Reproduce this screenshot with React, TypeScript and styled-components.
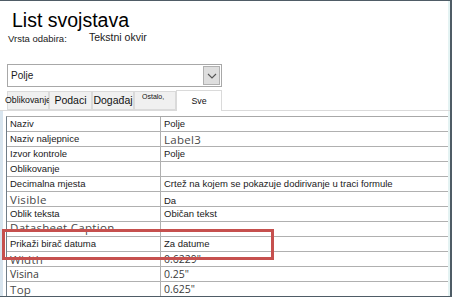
import { FC } from 'react';
import styled, { createGlobalStyle } from 'styled-components';

const GlobalStyle = createGlobalStyle`
  html, body {
    margin: 0;
    padding: 0;
    background: #fff;
  }
`;

type TextSize = 'normal' | 'big' | 'medium' | 'raised' | 'low';

interface RowData {
  label: string;
  value: string;
  labelSize?: TextSize;
  valueSize?: TextSize;
}

const rows: RowData[] = [
  { label: 'Naziv', value: 'Polje' },
  { label: 'Naziv naljepnice', value: 'Label3', valueSize: 'big' },
  { label: 'Izvor kontrole', value: 'Polje' },
  { label: 'Oblikovanje', value: '' },
  { label: 'Decimalna mjesta', value: 'Crtež na kojem se pokazuje dodirivanje u traci formule' },
  { label: 'Visible', value: 'Da', labelSize: 'big', valueSize: 'low' },
  { label: 'Oblik teksta', value: 'Običan tekst' },
  { label: 'Datasheet Caption', value: '', labelSize: 'raised' },
  { label: 'Prikaži birač datuma', value: 'Za datume' },
  { label: 'Width', value: '0.6229"', labelSize: 'big', valueSize: 'medium' },
  { label: 'Visina', value: '0.25"', labelSize: 'medium', valueSize: 'medium' },
  { label: 'Top', value: '0.625"', labelSize: 'big', valueSize: 'medium' },
];

const tabs = [
  { name: 'Oblikovanje', size: 'small', width: 42 },
  { name: 'Podaci', size: 'large', width: 43 },
  { name: 'Događaj', size: 'large', width: 42 },
  { name: 'Ostalo,', size: 'tiny', width: 42 },
  { name: 'Sve', size: 'small', width: 46 },
];

const Frame = styled.div`
  position: relative;
  width: 452px;
  height: 297px;
  box-sizing: border-box;
  border-top: 1px solid #4f5c66;
  border-right: 2px solid #4f5c66;
  border-bottom: 1px solid #4f5c66;
  box-shadow: inset -2px 0 0 #e4f3f3;
  overflow: hidden;
  font-family: 'Liberation Sans', Arial, sans-serif;
  color: #1a1a1a;
`;

const Header = styled.div`
  height: 63px;
  box-sizing: border-box;
  padding: 8px 0 0 8px;
`;

const Title = styled.h1`
  margin: 0 0 0 4px;
  font-size: 19.5px;
  line-height: 22px;
  font-weight: 400;
  color: #000;
`;

const SubRow = styled.div`
  display: flex;
  align-items: flex-start;
  margin-top: 1px;
`;

const SubLabel = styled.span`
  width: 81px;
  font-size: 9.5px;
  line-height: 12px;
  padding-top: 1px;
`;

const SubValue = styled.span`
  font-size: 10.5px;
  line-height: 12px;
  margin-top: -1px;
`;

const Dropdown = styled.div`
  display: flex;
  align-items: center;
  justify-content: space-between;
  margin-left: 7px;
  width: 215px;
  height: 23px;
  box-sizing: border-box;
  border: 1px solid #a8a8a8;
  padding: 0 1px 0 3px;
  font-size: 10px;
`;

const DropButton = styled.div`
  display: flex;
  align-items: center;
  justify-content: center;
  width: 17px;
  height: 19px;
  box-sizing: border-box;
  background: #dedede;
  border: 1px solid #b0b0b0;
`;

const TabStrip = styled.div`
  display: flex;
  align-items: flex-end;
  margin: 2px 0 0 7px;
  height: 21px;
`;

const Tab = styled.div<{ $active?: boolean; $width: number }>`
  position: relative;
  display: flex;
  align-items: ${(p) => (p.$active ? 'center' : 'flex-end')};
  justify-content: center;
  width: ${(p) => p.$width}px;
  height: ${(p) => (p.$active ? 21 : 19)}px;
  box-sizing: border-box;
  background: ${(p) => (p.$active ? '#fff' : '#f0f0f0')};
  border: 1px solid #dadada;
  border-bottom: ${(p) => (p.$active ? 'none' : '1px solid #dadada')};
  padding-bottom: ${(p) => (p.$active ? 0 : 3)}px;
  margin-bottom: ${(p) => (p.$active ? -1 : 0)}px;
  z-index: ${(p) => (p.$active ? 1 : 0)};
  white-space: nowrap;
`;

const TabLabel = styled.span<{ $size: string }>`
  font-size: ${(p) =>
    p.$size === 'large' ? '10.5px' : p.$size === 'tiny' ? '7px' : '8.8px'};
  line-height: 12px;
  color: #111;
  ${(p) =>
    p.$size === 'tiny' &&
    `position: absolute; top: -1px; left: 7px;`}
`;

const Panel = styled.div`
  border-top: 1px solid #dadada;
  padding: 5px 2px 0 6px;
  box-shadow: inset 3px 0 0 #d8e5ef;
  height: 190px;
`;

const Grid = styled.div`
  border-top: 1px solid #a8a8a8;
  border-left: 1px solid #6f7d88;
`;

const Row = styled.div`
  display: flex;
  height: 15px;
  box-sizing: border-box;
  border-bottom: 1px solid #b0b0b0;
`;

const sizeStyles: Record<TextSize, string> = {
  normal: 'font-size: 9.5px; line-height: 14px; color: #1a1a1a;',
  big: "font-family: 'Open Sans', sans-serif; font-size: 11.5px; line-height: 15px; color: #4a4a4a; letter-spacing: 0.3px;",
  medium: "font-family: 'Open Sans', sans-serif; font-size: 10.5px; line-height: 15px; color: #3a3a3a;",
  raised: "font-family: 'Open Sans', sans-serif; font-size: 11.5px; line-height: 11px; color: #4a4a4a; letter-spacing: 0.3px;",
  low: 'font-size: 9.5px; line-height: 17px; color: #1a1a1a;',
};

const LabelCell = styled.div<{ $size: TextSize }>`
  width: 154px;
  flex-shrink: 0;
  border-right: 1px solid #b0b0b0;
  padding-left: 3px;
  box-sizing: border-box;
  white-space: nowrap;
  ${(p) => sizeStyles[p.$size]}
`;

const ValueCell = styled.div<{ $size: TextSize }>`
  flex: 1;
  padding-left: 3px;
  white-space: nowrap;
  ${(p) => sizeStyles[p.$size]}
`;

const Highlight = styled.div`
  position: absolute;
  left: 2px;
  top: 228px;
  width: 272px;
  height: 31px;
  box-sizing: border-box;
  border: 3px solid #c6504e;
  pointer-events: none;
`;

const App: FC = () => {
  return (
    <>
      <GlobalStyle />
      <Frame>
        <Header>
          <Title>List svojstava</Title>
          <SubRow>
            <SubLabel>Vrsta odabira:</SubLabel>
            <SubValue>Tekstni okvir</SubValue>
          </SubRow>
        </Header>
        <Dropdown>
          <span>Polje</span>
          <DropButton>
            <svg width="10" height="6" viewBox="0 0 10 6">
              <polyline points="1,1 5,5 9,1" fill="none" stroke="#555" strokeWidth="1.1" />
            </svg>
          </DropButton>
        </Dropdown>
        <TabStrip>
          {tabs.map((t) => (
            <Tab key={t.name} $active={t.name === 'Sve'} $width={t.width}>
              <TabLabel $size={t.size}>{t.name}</TabLabel>
            </Tab>
          ))}
        </TabStrip>
        <Panel>
          <Grid>
            {rows.map((r) => (
              <Row key={r.label}>
                <LabelCell $size={r.labelSize ?? 'normal'}>{r.label}</LabelCell>
                <ValueCell $size={r.valueSize ?? 'normal'}>{r.value}</ValueCell>
              </Row>
            ))}
          </Grid>
        </Panel>
        <Highlight />
      </Frame>
    </>
  );
};

export default App;
